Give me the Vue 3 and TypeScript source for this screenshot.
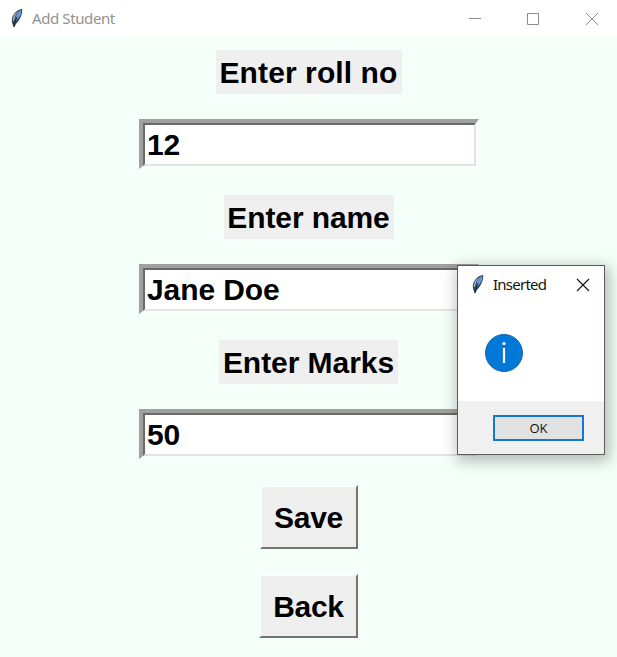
<script setup lang="ts">
import { ref } from 'vue'

interface Field {
  label: string
  value: string
  width: number
  spacing: string
}

const fields = ref<Field[]>([
  { label: 'Enter roll no', value: '12', width: 186, spacing: '0.1px' },
  { label: 'Enter name', value: 'Jane Doe', width: 170, spacing: '-0.1px' },
  { label: 'Enter Marks', value: '50', width: 179, spacing: '-0.05px' },
])
const showDialog = ref(true)
</script>

<template>
  <div class="window">
    <header class="titlebar">
      <svg class="feather" width="14" height="20" viewBox="0 0 14 20">
        <path d="M2.300 15.500C.5 10 4 2.500 12 .8C13.200 5 10 12 6 16L4 19.500Z" fill="#34465c" />
        <path d="M5.800 12.500C5 7.500 7.500 3.500 11.200 2C11.800 5.500 9.500 10.500 5.800 12.500Z" fill="#6698d8" />
        <path d="M3 13C2.500 9 5 5 8 3.200C5.500 6.500 4.500 9.500 4 13Z" fill="#a3b4c8" />
        <path d="M7 9C5.500 12 4.500 15 3.900 19" fill="none" stroke="#18202b" />
      </svg>
      <span class="title">Add Student</span>
      <svg class="controls" width="130" height="14" viewBox="0 0 130 14" fill="none" stroke="#8c8c8c">
        <path d="M0 6.500H12M58.500 1.500H69.500V12.500H58.500ZM117 1L129 13M129 1L117 13" />
      </svg>
    </header>

    <main class="form">
      <div v-for="field in fields" :key="field.label" class="field">
        <label class="label" :style="{ width: field.width + 'px', letterSpacing: field.spacing }">{{ field.label }}</label>
        <div class="entry"><input v-model="field.value" class="input" type="text" spellcheck="false" /></div>
      </div>
      <button class="button save" type="button" @click="showDialog = true">Save</button>
      <button class="button back" type="button">Back</button>
    </main>

    <section v-if="showDialog" class="dialog">
      <div class="dialog-title">
        <svg class="feather" width="14" height="20" viewBox="0 0 14 20">
          <path d="M2.300 15.500C.5 10 4 2.500 12 .8C13.200 5 10 12 6 16L4 19.500Z" fill="#34465c" />
          <path d="M5.800 12.500C5 7.500 7.500 3.500 11.200 2C11.800 5.500 9.500 10.500 5.800 12.500Z" fill="#6698d8" />
          <path d="M3 13C2.500 9 5 5 8 3.200C5.500 6.500 4.500 9.500 4 13Z" fill="#a3b4c8" />
          <path d="M7 9C5.500 12 4.500 15 3.900 19" fill="none" stroke="#18202b" />
        </svg>
        <span class="dialog-name">Inserted</span>
        <svg class="dialog-close" width="14" height="14" viewBox="0 0 14 14" fill="none" stroke="#111" stroke-width="1.100" @click="showDialog = false">
          <path d="M1 1L13 13M13 1L1 13" />
        </svg>
      </div>
      <div class="dialog-body">
        <svg width="38" height="38" viewBox="0 0 38 38">
          <circle cx="19" cy="19" r="18.500" fill="#0078d7" stroke="#1766a6" />
          <circle cx="19" cy="9.500" r="1.600" fill="#fff" />
          <path d="M19 13.800V29" stroke="#fff" stroke-width="2.200" />
        </svg>
      </div>
      <div class="dialog-footer">
        <button class="ok" type="button" @click="showDialog = false">OK</button>
      </div>
    </section>
  </div>
</template>

<style>
body {
  margin: 0;
  background: #f4fffa;
}
</style>

<style scoped>
.window {
  position: relative;
  width: 617px;
  height: 657px;
  overflow: hidden;
  background: #f4fffa;
  font-family: "Liberation Sans", Arial, sans-serif;
}
.titlebar {
  display: flex;
  align-items: center;
  box-sizing: border-box;
  height: 38px;
  padding: 0 18px 0 10px;
  background: #fff;
}
.feather {
  flex: none;
}
.titlebar .feather {
  margin-bottom: 3px;
}
.title {
  margin: 0 0 2px 8px;
  color: #929292;
  font: 15px/20px "Noto Sans", "Open Sans", sans-serif;
  letter-spacing: -0.400px;
}
.controls {
  margin-left: auto;
}
.form {
  display: flex;
  flex-direction: column;
  align-items: center;
  padding-top: 12px;
}
.field {
  display: flex;
  flex-direction: column;
  align-items: center;
  height: 145px;
}
.label {
  box-sizing: border-box;
  height: 44px;
  background: #f0eff0;
  color: #000;
  font-size: 30px;
  font-weight: bold;
  line-height: 46px;
  text-align: center;
  white-space: nowrap;
}
.entry {
  box-sizing: border-box;
  width: 340px;
  height: 50px;
  margin: 25px 0 0 1px;
  border: solid;
  border-width: 4px 3px 3px 4px;
  border-color: #a0a0a0 #f8fffc #f8fffc #a0a0a0;
}
.input {
  display: block;
  box-sizing: border-box;
  width: 100%;
  height: 100%;
  margin: 0;
  padding: 1px 1px 0 2px;
  border: 2px solid;
  border-color: #696969 #e3e3e3 #e3e3e3 #696969;
  border-radius: 0;
  outline: 0;
  background: #fff;
  color: #000;
  font: bold 30px "Liberation Sans", Arial, sans-serif;
  letter-spacing: -0.100px;
}
.button {
  box-sizing: border-box;
  width: 98px;
  height: 64px;
  padding: 1px 0 0;
  border: 2px solid;
  border-color: #fbfffd #747474 #747474 #fbfffd;
  border-radius: 0;
  background: #f0eff0;
  color: #000;
  font: bold 30px/60px "Liberation Sans", Arial, sans-serif;
  letter-spacing: -0.300px;
}
.back {
  width: 99px;
  margin-top: 25px;
}
.dialog {
  position: absolute;
  top: 265px;
  left: 457px;
  display: flex;
  flex-direction: column;
  box-sizing: border-box;
  width: 148px;
  height: 190px;
  border: 1px solid #5a5c5b;
  background: #fff;
  box-shadow: 2px 4px 14px 2px rgba(0, 0, 0, 0.28);
}
.dialog-title {
  display: flex;
  align-items: center;
  height: 38px;
  padding: 0 14px 0 13px;
}
.dialog-name {
  margin: 0 0 2px 8px;
  color: #111;
  font: 15px/20px "Noto Sans", "Open Sans", sans-serif;
  letter-spacing: -0.750px;
}
.dialog .feather {
  margin-bottom: 2px;
}
.dialog-close {
  margin-left: auto;
}
.dialog-body {
  flex: 1;
  padding: 30px 0 0 27px;
}
.dialog-footer {
  box-sizing: border-box;
  height: 53px;
  padding: 14px 0 0 35px;
  background: #f0f0f0;
}
.ok {
  display: block;
  box-sizing: border-box;
  width: 91px;
  height: 26px;
  padding: 0;
  border: 2px solid #1478d0;
  border-radius: 0;
  background: #e1e1e1;
  color: #111;
  font: 13px/23px "Open Sans", sans-serif;
}
</style>
